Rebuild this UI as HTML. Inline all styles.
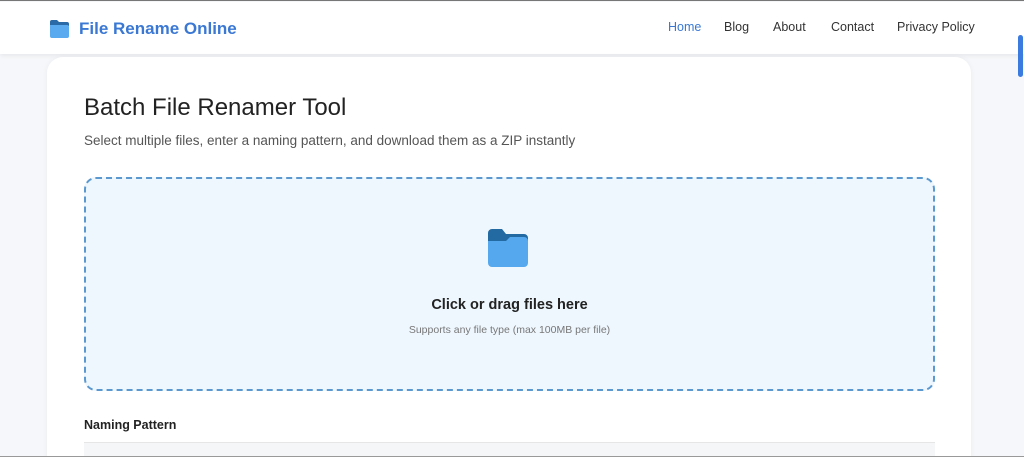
<!DOCTYPE html>
<html style="overflow:hidden;height:457px"><head><style>
*{margin:0;padding:0;box-sizing:border-box}
body{width:1024px;height:457px;overflow:hidden;background:#f5f7fa;font-family:"Liberation Sans",sans-serif;position:relative;border-top:1px solid #777}
.hdr{position:absolute;top:1px;left:0;width:1024px;height:52px;background:#fff;box-shadow:0 2px 4px rgba(0,0,0,.06)}
.logo{position:absolute;left:49px;top:17px;display:flex;align-items:center}
.logo span{font-weight:bold;font-size:17px;color:#3a78d4;margin-left:9px}
.nav{position:absolute;top:18px;font-size:12.5px;color:#333}
.card{position:absolute;left:47px;top:56px;width:924px;height:420px;background:#fff;border-radius:16px;box-shadow:0 0 6px rgba(0,0,0,.05)}
h1{position:absolute;left:84px;top:93px;font-weight:normal;font-size:24px;color:#222}
.sub{position:absolute;left:84px;top:132px;font-size:13.5px;color:#555}
.drop{position:absolute;left:84px;top:176px;width:851px;height:214px;border:2px dashed #5a98cf;border-radius:12px;background:#eef7fe}
.t1{position:absolute;left:0;width:100%;text-align:center;top:118px;font-weight:bold;font-size:14.5px;color:#222}
.t2{position:absolute;left:0;width:100%;text-align:center;top:145px;font-size:10.5px;color:#777}
.np{position:absolute;left:84px;top:417px;font-weight:bold;font-size:12.5px;color:#222}
.inp{position:absolute;left:84px;top:441px;width:851px;height:16px;background:#f5f6f7;border-top:1px solid #e6e6e6}
.sb{position:absolute;left:1018px;top:34px;width:5px;height:42px;background:#3b7be0;border-radius:3px}
.bot{position:absolute;left:0;top:455px;width:1024px;height:2px;background:#999}
</style></head><body>
<div class="hdr">
<div class="logo"><svg width="21" height="18" viewBox="0 0 21 18"><path d="M1 2a2 2 0 0 1 2-2h5l2 2h8a2 2 0 0 1 2 2v2H1z" fill="#2a6aa6"/><path d="M1 5h17a2 2 0 0 1 2 2v9a2 2 0 0 1-2 2H3a2 2 0 0 1-2-2z" fill="#5aaaf0"/></svg><span>File Rename Online</span></div>
<div class="nav" style="left:668px;color:#3a78d4">Home</div>
<div class="nav" style="left:724px">Blog</div>
<div class="nav" style="left:773px">About</div>
<div class="nav" style="left:831px">Contact</div>
<div class="nav" style="left:897px">Privacy Policy</div>
</div>
<div class="card"></div>
<h1>Batch File Renamer Tool</h1>
<div class="sub">Select multiple files, enter a naming pattern, and download them as a ZIP instantly</div>
<div class="drop">
<svg style="position:absolute;left:402px;top:50px" width="42" height="38" viewBox="0 0 42 38"><path d="M0 4a4 4 0 0 1 4-4h10l4 5h18a4 4 0 0 1 4 4v4H0z" fill="#236aa3"/><path d="M0 12h18l4-4h14a4 4 0 0 1 4 4v22a4 4 0 0 1-4 4H4a4 4 0 0 1-4-4z" fill="#55a8ee"/></svg>
<div class="t1">Click or drag files here</div>
<div class="t2">Supports any file type (max 100MB per file)</div>
</div>
<div class="np">Naming Pattern</div>
<div class="inp"></div>
<div class="sb"></div>
<div class="bot"></div>
</body></html>
